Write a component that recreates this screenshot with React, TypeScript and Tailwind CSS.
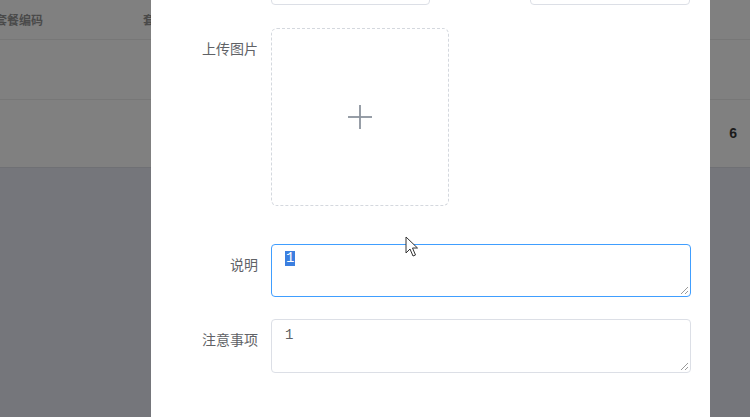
import React from "react";

const cjk = { fontFamily: '"Noto Sans CJK SC", "Noto Sans", sans-serif' };

function Grip() {
  return (
    <svg width="10" height="10" viewBox="0 0 10 10" className="absolute right-[1px] bottom-[1px]">
      <line x1="9" y1="2" x2="2" y2="9" stroke="#9a9a9a" strokeWidth="1" />
      <line x1="9" y1="6" x2="6" y2="9" stroke="#9a9a9a" strokeWidth="1" />
    </svg>
  );
}

function Label({ children }: { children: React.ReactNode }) {
  return (
    <div className="w-[120px] shrink-0 pr-[13px] text-right text-[14px] leading-[40px] text-[#606266]" style={cjk}>
      {children}
    </div>
  );
}

export default function App() {
  return (
    <div className="relative w-[750px] h-[417px] overflow-hidden bg-[#75767b]" style={cjk}>
      {/* background table (under overlay) */}
      <div className="flex flex-col bg-[#808080]">
        <div className="h-[40px] border-b border-[#777777] flex items-center text-[12px] font-bold text-[#4a4a4a]">
          <span className="ml-[-5px] whitespace-nowrap">套餐编码</span>
          <span className="ml-[100px]">套</span>
        </div>
        <div className="h-[60px] border-b border-[#777777]" />
        <div className="h-[68px] border-b border-[#6f7074] flex items-center justify-end pr-[13px]">
          <span className="text-[14px] font-bold text-[#1c1c1c]" style={{ fontFamily: '"Liberation Sans", Arial, sans-serif' }}>6</span>
        </div>
      </div>

      {/* modal */}
      <div className="absolute left-[151px] top-0 w-[559px] h-[417px] bg-white">
        <div className="flex flex-col mt-[-27px]">
          {/* top row inputs */}
          <div className="flex h-[32px]">
            <div className="ml-[120px] w-[159px] h-[32px] border border-[#dcdfe6] rounded-[4px]" />
            <div className="ml-[100px] w-[160px] h-[32px] border border-[#dcdfe6] rounded-[4px]" />
          </div>

          {/* upload */}
          <div className="flex mt-[23px]">
            <Label>上传图片</Label>
            <div className="w-[178px] h-[178px] border border-dashed border-[#d4d8de] rounded-[6px] bg-white flex items-center justify-center">
              <svg width="24" height="24" viewBox="0 0 24 24">
                <line x1="0" y1="12" x2="24" y2="12" stroke="#8c939d" strokeWidth="1.8" />
                <line x1="12" y1="0" x2="12" y2="24" stroke="#8c939d" strokeWidth="1.8" />
              </svg>
            </div>
          </div>

          {/* 说明 */}
          <div className="flex mt-[38px]">
            <Label>说明</Label>
            <div className="relative w-[420px] h-[53px] border border-[#409eff] rounded-[4px] px-[13px] pt-[6px]">
              <span
                className="block w-fit bg-[#3b7fe0] text-white text-[14px] leading-[15px] px-[1px]"
                style={{ fontFamily: '"Liberation Mono", monospace' }}
              >
                1
              </span>
              <Grip />
            </div>
          </div>

          {/* 注意事项 */}
          <div className="flex mt-[22px]">
            <Label>注意事项</Label>
            <div className="relative w-[420px] h-[54px] border border-[#dcdfe6] rounded-[4px] px-[13px] pt-[7px]">
              <span
                className="block text-[14px] leading-[16px] text-[#606266]"
                style={{ fontFamily: '"Liberation Mono", monospace' }}
              >
                1
              </span>
              <Grip />
            </div>
          </div>
        </div>
      </div>

      {/* mouse cursor */}
      <svg className="absolute left-[405px] top-[236px]" width="14" height="22" viewBox="0 0 14 22">
        <path d="M1 1 L1 17 L5 13 L8 20 L10.5 19 L7.5 12 L12.5 12 Z" fill="white" stroke="#333" strokeWidth="1" strokeLinejoin="round" />
      </svg>
    </div>
  );
}
